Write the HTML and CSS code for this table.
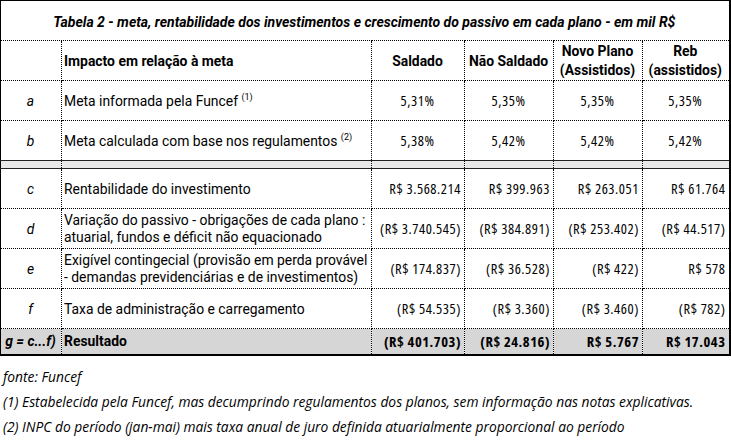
FILE: index.html
```html
<!DOCTYPE html>
<html lang="pt-BR">
<head>
<meta charset="utf-8">
<title>Tabela 2</title>
<link rel="stylesheet" href="styles.css">
</head>
<body>
<table class="tbl">
  <colgroup>
    <col class="c-key">
    <col class="c-desc">
    <col class="c-v1">
    <col class="c-v2">
    <col class="c-v3">
    <col class="c-v4">
  </colgroup>
  <tr class="r-title">
    <td colspan="6" class="title">Tabela 2 - meta, rentabilidade dos investimentos e crescimento do passivo em cada plano - em mil R$</td>
  </tr>
  <tr class="r-head">
    <td class="key"></td>
    <td class="desc head">Impacto em relação à meta</td>
    <td class="head ctr">Saldado</td>
    <td class="head ctr">Não Saldado</td>
    <td class="head ctr two">Novo Plano<br>(Assistidos)</td>
    <td class="head ctr two">Reb<br>(assistidos)</td>
  </tr>
  <tr class="r-std">
    <td class="key">a</td>
    <td class="desc">Meta informada pela Funcef <sup class="note">(1)</sup></td>
    <td class="num ctr">5,31%</td>
    <td class="num ctr">5,35%</td>
    <td class="num ctr">5,35%</td>
    <td class="num ctr">5,35%</td>
  </tr>
  <tr class="r-std">
    <td class="key">b</td>
    <td class="desc">Meta calculada com base nos regulamentos <sup class="note">(2)</sup></td>
    <td class="num ctr">5,38%</td>
    <td class="num ctr">5,42%</td>
    <td class="num ctr">5,42%</td>
    <td class="num ctr">5,42%</td>
  </tr>
  <tr class="r-band">
    <td></td><td></td><td></td><td></td><td></td><td></td>
  </tr>
  <tr class="r-std">
    <td class="key">c</td>
    <td class="desc">Rentabilidade do investimento</td>
    <td class="num">R$ 3.568.214</td>
    <td class="num">R$ 399.963</td>
    <td class="num">R$ 263.051</td>
    <td class="num">R$ 61.764</td>
  </tr>
  <tr class="r-std">
    <td class="key">d</td>
    <td class="desc two">Variação do passivo - obrigações de cada plano :<br>atuarial, fundos e déficit não equacionado</td>
    <td class="num">(R$ 3.740.545)</td>
    <td class="num">(R$ 384.891)</td>
    <td class="num">(R$ 253.402)</td>
    <td class="num">(R$ 44.517)</td>
  </tr>
  <tr class="r-std">
    <td class="key">e</td>
    <td class="desc two">Exigível contingecial (provisão em perda provável<br>- demandas previdenciárias e de investimentos)</td>
    <td class="num">(R$ 174.837)</td>
    <td class="num">(R$ 36.528)</td>
    <td class="num">(R$ 422)</td>
    <td class="num">R$ 578</td>
  </tr>
  <tr class="r-std">
    <td class="key">f</td>
    <td class="desc">Taxa de administração e carregamento</td>
    <td class="num">(R$ 54.535)</td>
    <td class="num">(R$ 3.360)</td>
    <td class="num">(R$ 3.460)</td>
    <td class="num">(R$ 782)</td>
  </tr>
  <tr class="r-total">
    <td class="key total-key">g = c...f)</td>
    <td class="desc head">Resultado</td>
    <td class="num">(R$ 401.703)</td>
    <td class="num">(R$ 24.816)</td>
    <td class="num">R$ 5.767</td>
    <td class="num">R$ 17.043</td>
  </tr>
</table>
<div class="notes">
  <p class="note-line">fonte: Funcef</p>
  <p class="note-line">(1) Estabelecida pela Funcef, mas decumprindo regulamentos dos planos, sem informação nas notas explicativas.</p>
  <p class="note-line">(2) INPC do período (jan-mai) mais taxa anual de juro definida atuarialmente proporcional ao período</p>
</div>
</body>
</html>
```
FILE: styles.css
```css
html, body {
  margin: 0;
  padding: 0;
  background: #ffffff;
  color: #000000;
}

body {
  font-family: Roboto, "Noto Sans", sans-serif;
  font-size: 13.9px;
}

.tbl {
  border-collapse: collapse;
  table-layout: fixed;
  width: 729px;
  border-top: 1px solid #000;
  border-left: 1px solid #000;
  border-right: 2px solid #000;
  border-bottom: 2px solid #000;
}

.c-key { width: 61px; }
.c-desc { width: 310px; }
.c-v1 { width: 93px; }
.c-v2 { width: 89px; }
.c-v3 { width: 89px; }
.c-v4 { width: 87px; }

.tbl td {
  border: 1px dotted #000;
  padding: 0 3px 0 2px;
  vertical-align: middle;
  white-space: nowrap;
  overflow: hidden;
}

.r-title { height: 40px; }
.r-head { height: 40px; }
.r-std { height: 40px; }
.r-band { height: 8px; }
.r-total { height: 26px; }

.tbl .title {
  border-left: 1px solid #000;
  border-right: 2px solid #000;
  text-align: center;
  font-weight: 700;
  font-style: italic;
  font-size: 14px;
  padding-top: 2px;
}

.key {
  text-align: center;
  font-style: italic;
  padding-top: 3px;
}

.desc {
  text-align: left;
  padding-top: 3px;
}

.desc.two {
  line-height: 17px;
  padding-top: 1px;
}

.head {
  font-weight: 700;
}

.ctr {
  text-align: center;
}

.head.two {
  line-height: 19px;
}

.num {
  font-family: "Open Sans", sans-serif;
  font-stretch: 75%;
  font-size: 14.5px;
  letter-spacing: 0.55px;
  text-align: right;
  padding-top: 3px;
  padding-right: 3px;
}

.num.ctr {
  text-align: center;
}

.note {
  font-size: 9px;
  vertical-align: 0;
  position: relative;
  top: -6px;
}

.tbl .r-band td {
  background: #e8e8e8;
  border-top: 1px solid #222;
  border-bottom: 1px solid #222;
  padding: 0;
  height: 6px;
}

.r-total td {
  background: #d6d6d6;
}

.r-total .num {
  font-weight: 700;
  padding-top: 0;
}

.r-total .desc {
  padding-top: 0;
}

.total-key {
  font-weight: 700;
  padding-top: 0;
}

.notes {
  margin-top: 8px;
  padding-left: 3px;
}

.note-line {
  margin: 0;
  height: 25px;
  line-height: 25px;
  font-family: "Open Sans", sans-serif;
  font-style: italic;
  font-size: 13.8px;
}
```
